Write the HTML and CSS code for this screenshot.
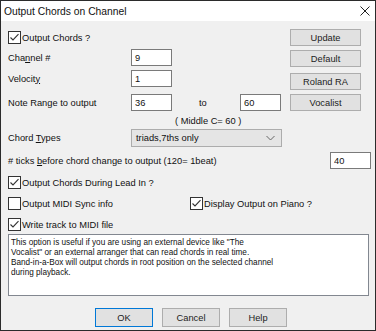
FILE: index.html
```html
<!DOCTYPE html>
<html>
<head>
  <title>Output Chords on Channel</title>
  <link rel="stylesheet" href="styles.css">
</head>
<body>
  <div class="window">
    <div class="titlebar">
      <span>Output Chords on Channel</span>
      <svg class="close" width="10" height="10" viewBox="0 0 10 10"><path d="M0.5 0.5L9.5 9.5M9.5 0.5L0.5 9.5" stroke="#222" stroke-width="1" fill="none"/></svg>
    </div>

    <div class="content">
      <div class="top">
        <div class="form">
          <label class="row r1 check">
            <svg class="box" width="13" height="13" viewBox="0 0 13 13"><rect x="0.5" y="0.5" width="12" height="12" fill="#fff" stroke="#333"/><path d="M2.5 6.5L5 9L10.5 3.2" stroke="#333" stroke-width="1.1" fill="none"/></svg>
            <span>Output Chords ?</span>
          </label>
          <div class="row r2">
            <span class="label">Cha<u>n</u>nel #</span>
            <input class="field" type="text" value="9">
          </div>
          <div class="row r3">
            <span class="label">Velocit<u>y</u></span>
            <input class="field" type="text" value="1">
          </div>
          <div class="row r4">
            <span class="label">Note Range to output</span>
            <input class="field" type="text" value="36">
            <span class="to">to</span>
            <input class="field" type="text" value="60">
          </div>
          <div class="row r5">
            <span class="middle">( Middle C= 60 )</span>
          </div>
          <div class="row r6">
            <span class="label">Chord <u>T</u>ypes</span>
            <div class="combo">
              <span>triads,7ths only</span>
              <svg width="9" height="6" viewBox="0 0 9 6"><path d="M0.5 1L4.5 5L8.5 1" stroke="#666" stroke-width="1" fill="none"/></svg>
            </div>
          </div>
        </div>
        <div class="side">
          <button class="btn">Update</button>
          <button class="btn b2">Default</button>
          <button class="btn b3">Roland RA</button>
          <button class="btn b4">Vocalist</button>
        </div>
      </div>

      <div class="row r7">
        <span># ticks <u>b</u>efore chord change to output (120= 1beat)</span>
        <input class="field ticks" type="text" value="40">
      </div>

      <label class="row opt check">
        <svg class="box" width="13" height="13" viewBox="0 0 13 13"><rect x="0.5" y="0.5" width="12" height="12" fill="#fff" stroke="#333"/><path d="M2.5 6.5L5 9L10.5 3.2" stroke="#333" stroke-width="1.1" fill="none"/></svg>
        <span>Output Chords During Lead In ?</span>
      </label>
      <div class="row opt">
        <label class="check sync">
          <svg class="box" width="13" height="13" viewBox="0 0 13 13"><rect x="0.5" y="0.5" width="12" height="12" fill="#fff" stroke="#333"/></svg>
          <span>Output MIDI Sync info</span>
        </label>
        <label class="check">
          <svg class="box" width="13" height="13" viewBox="0 0 13 13"><rect x="0.5" y="0.5" width="12" height="12" fill="#fff" stroke="#333"/><path d="M2.5 6.5L5 9L10.5 3.2" stroke="#333" stroke-width="1.1" fill="none"/></svg>
          <span>Display Output on Piano ?</span>
        </label>
      </div>
      <label class="row opt check">
        <svg class="box" width="13" height="13" viewBox="0 0 13 13"><rect x="0.5" y="0.5" width="12" height="12" fill="#fff" stroke="#333"/><path d="M2.5 6.5L5 9L10.5 3.2" stroke="#333" stroke-width="1.1" fill="none"/></svg>
        <span>Write track to MIDI file</span>
      </label>

      <div class="note">
        This option is useful if you are using an external device like "The<br>
        Vocalist" or an external arranger that can read chords in real time.<br>
        Band-in-a-Box will output chords in root position on the selected channel<br>
        during playback.
      </div>

      <div class="actions">
        <button class="btn big default">OK</button>
        <button class="btn big">Cancel</button>
        <button class="btn big">Help</button>
      </div>
    </div>
  </div>
</body>
</html>
```

FILE: styles.css
```css
* {
  box-sizing: border-box;
}

body {
  margin: 0;
  font-family: "Liberation Sans", Arial, sans-serif;
  font-size: 9.3px;
  color: #111;
}

.window {
  width: 376px;
  height: 331px;
  border: 1px solid #2b2b2b;
  background: #f0f0f0;
  display: flex;
  flex-direction: column;
}

.titlebar {
  height: 20px;
  background: #fff;
  display: flex;
  align-items: center;
  justify-content: space-between;
  padding: 0 5px 0 3px;
  font-size: 10.3px;
  color: #111;
}

.content {
  padding: 8px 4px 0 7px;
}

.top {
  display: flex;
}

.form {
  width: 282px;
}

.row {
  display: flex;
  align-items: center;
}

.label {
  width: 123px;
}

.check {
  display: flex;
  align-items: center;
  gap: 1px;
}

.box {
  flex: none;
}

.r1 { height: 17px; }
.r2 { height: 17px; margin-top: 3px; }
.r3 { height: 17px; margin-top: 4px; }
.r4 { height: 17px; margin-top: 7px; }
.r5 { height: 14px; margin-top: 3px; }
.r6 { height: 18px; margin-top: 1px; }

.field {
  width: 41px;
  height: 17px;
  margin: 0;
  padding: 0 3px;
  border: 1px solid #7a7a7a;
  background: #fff;
  font: inherit;
  color: #111;
}

.to {
  margin-left: 27px;
  width: 41px;
}

.middle {
  margin-left: 167px;
}

.combo {
  width: 151px;
  height: 18px;
  border: 1px solid #acacac;
  background: #e5e5e5;
  display: flex;
  align-items: center;
  justify-content: space-between;
  padding: 0 6px 0 4px;
}

.side {
  display: flex;
  flex-direction: column;
  width: 71px;
}

.btn {
  height: 17px;
  margin: 0;
  padding: 0;
  border: 1px solid #adadad;
  background: #e1e1e1;
  font: inherit;
  font-weight: normal;
  color: #222;
}

.b2 { margin-top: 4px; }
.b3 { margin-top: 6px; }
.b4 { margin-top: 4px; }

.r7 {
  height: 17px;
  margin-top: 5px;
  justify-content: space-between;
}

.opt {
  height: 15px;
  margin-top: 6px;
}

.sync {
  width: 182px;
}

.note {
  margin-top: 2px;
  width: 361px;
  height: 62px;
  border: 1px solid #828790;
  background: #fff;
  padding: 3px 2px;
  font-size: 8.2px;
  line-height: 10px;
}

.actions {
  display: flex;
  gap: 9px;
  margin-top: 12px;
  padding-left: 87px;
}

.btn.big {
  width: 58px;
  height: 19px;
}

.btn.default {
  border-color: #0078d7;
}
```
